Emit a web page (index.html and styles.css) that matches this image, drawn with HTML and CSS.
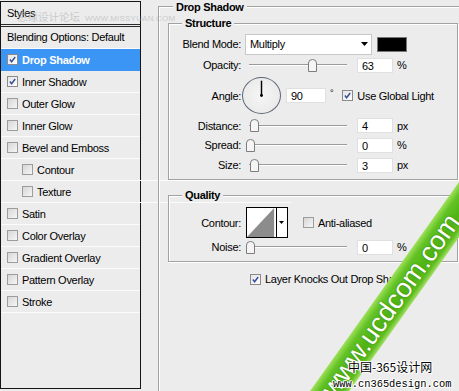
FILE: index.html
```html
<!DOCTYPE html>
<html>
<head>
<meta charset="utf-8">
<link rel="stylesheet" href="styles.css">
</head>
<body>
<div class="app">
  <aside class="styles">
    <div class="styles-head">Styles</div>
    <div class="blend-row">Blending Options: Default</div>
    <ul class="fx-list">
      <li class="fx selected"><span class="cb on"><svg viewBox="0 0 11 11"><path d="M2.3 5.6 L4.4 8.2 L8.8 2.4"/></svg></span>Drop Shadow</li>
      <li class="fx"><span class="cb on"><svg viewBox="0 0 11 11"><path d="M2.3 5.6 L4.4 8.2 L8.8 2.4"/></svg></span>Inner Shadow</li>
      <li class="fx"><span class="cb"></span>Outer Glow</li>
      <li class="fx"><span class="cb"></span>Inner Glow</li>
      <li class="fx"><span class="cb"></span>Bevel and Emboss</li>
      <li class="fx sub"><span class="cb"></span>Contour</li>
      <li class="fx sub"><span class="cb"></span>Texture</li>
      <li class="fx"><span class="cb"></span>Satin</li>
      <li class="fx"><span class="cb"></span>Color Overlay</li>
      <li class="fx"><span class="cb"></span>Gradient Overlay</li>
      <li class="fx"><span class="cb"></span>Pattern Overlay</li>
      <li class="fx"><span class="cb"></span>Stroke</li>
    </ul>
  </aside>

  <main class="panel">
    <section class="group outer">
      <div class="g-title outer-title">Drop Shadow</div>

      <section class="group sub structure">
        <div class="g-title">Structure</div>
        <div class="row r-blend">
          <span class="lbl">Blend Mode:</span>
          <div class="select"><span>Multiply</span><svg class="arrow" viewBox="0 0 7 4"><path d="M0 0 H7 L3.5 4 Z"/></svg></div>
          <span class="swatch"></span>
        </div>
        <div class="row r-20">
          <span class="lbl">Opacity:</span>
          <div class="slider"><svg class="thumb" style="margin-left:62px" viewBox="0 0 9 13"><path d="M0.5 4 Q0.5 0.5 4.5 0.5 Q8.5 0.5 8.5 4 V12.5 H0.5 Z"/></svg></div>
          <span class="field">63</span><span class="unit">%</span>
        </div>
        <div class="row r-angle">
          <span class="lbl">Angle:</span>
          <div class="dial"><svg viewBox="0 0 39 39"><line x1="19.5" y1="19.5" x2="19.5" y2="3" /><circle cx="19.5" cy="19.5" r="1.6"/></svg></div>
          <span class="field angle-field">90</span><span class="deg">°</span>
          <span class="cb on global"><svg viewBox="0 0 11 11"><path d="M2.3 5.6 L4.4 8.2 L8.8 2.4"/></svg></span><span>Use Global Light</span>
        </div>
        <div class="row r-19">
          <span class="lbl">Distance:</span>
          <div class="slider"><svg class="thumb" style="margin-left:4px" viewBox="0 0 9 13"><path d="M0.5 4 Q0.5 0.5 4.5 0.5 Q8.5 0.5 8.5 4 V12.5 H0.5 Z"/></svg></div>
          <span class="field">4</span><span class="unit">px</span>
        </div>
        <div class="row r-20">
          <span class="lbl">Spread:</span>
          <div class="slider"><svg class="thumb" style="margin-left:0px" viewBox="0 0 9 13"><path d="M0.5 4 Q0.5 0.5 4.5 0.5 Q8.5 0.5 8.5 4 V12.5 H0.5 Z"/></svg></div>
          <span class="field">0</span><span class="unit">%</span>
        </div>
        <div class="row r-20">
          <span class="lbl">Size:</span>
          <div class="slider"><svg class="thumb" style="margin-left:4px" viewBox="0 0 9 13"><path d="M0.5 4 Q0.5 0.5 4.5 0.5 Q8.5 0.5 8.5 4 V12.5 H0.5 Z"/></svg></div>
          <span class="field">3</span><span class="unit">px</span>
        </div>
      </section>

      <section class="group sub quality">
        <div class="g-title">Quality</div>
        <div class="row r-contour">
          <span class="lbl">Contour:</span>
          <div class="contour">
            <svg class="curve" viewBox="0 0 31 31"><polygon points="0,31 29,0 29,31" /></svg>
            <svg class="c-arrow" viewBox="0 0 5 3"><path d="M0 0 H5 L2.5 3 Z"/></svg>
          </div>
          <span class="cb anti"></span><span>Anti-aliased</span>
        </div>
        <div class="row r-noise">
          <span class="lbl">Noise:</span>
          <div class="slider"><svg class="thumb" style="margin-left:0px" viewBox="0 0 9 13"><path d="M0.5 4 Q0.5 0.5 4.5 0.5 Q8.5 0.5 8.5 4 V12.5 H0.5 Z"/></svg></div>
          <span class="field">0</span><span class="unit">%</span>
        </div>
      </section>

      <div class="knock">
        <span class="cb on"><svg viewBox="0 0 11 11"><path d="M2.3 5.6 L4.4 8.2 L8.8 2.4"/></svg></span><span>Layer Knocks Out Drop Shadow</span>
      </div>
    </section>
  </main>
</div>

<div class="wm-top"><span class="wm-cjk">思缘设计论坛</span><span class="wm-url">WWW.MISSYUAN.COM</span></div>
<div class="wm-band"><span>www.ucdcom.com</span></div>
<div class="wm-cn"><div class="cn-name">中国-365设计网</div><div class="cn-url">www.cn365design.com</div></div>
</body>
</html>
```

FILE: styles.css
```css
* { box-sizing: border-box; margin: 0; padding: 0; }
html, body { width: 459px; height: 391px; overflow: hidden; }
body {
  position: relative;
  background: #ececec;
  font: 11px "Liberation Sans", Arial, sans-serif;
  letter-spacing: -0.3px;
  color: #000;
}
.app { display: flex; height: 391px; }

/* Left styles list */
.styles {
  flex: none;
  width: 141px;
  height: 388px;
  margin-top: 1px;
  border: 1px solid #151515;
  background: #ececec;
}
.styles-head {
  height: 23px;
  padding-left: 6px;
  line-height: 22px;
  border-bottom: 1px solid #2a2a2a;
}
.blend-row {
  height: 23px;
  margin-top: 1px;
  border-top: 1px solid #2a2a2a;
  border-bottom: 1px solid #fbfbfb;
  padding-left: 6px;
  line-height: 21px;
}
.fx-list { list-style: none; }
.fx {
  display: flex;
  align-items: center;
  height: 22px;
  padding-left: 6px;
  border-bottom: 1px solid #fbfbfb;
}
.fx.sub { padding-left: 21px; }
.fx .cb { margin-right: 4px; }
.fx.selected {
  background: #3b95f4;
  color: #fff;
  font-weight: bold;
  border-bottom-color: #3b95f4;
}

/* checkbox */
.cb {
  flex: none;
  display: inline-block;
  width: 11px;
  height: 11px;
  border: 1px solid #9c9c9c;
  background: linear-gradient(135deg, #d6d6d6, #f6f6f6);
}
.cb.on { background: linear-gradient(135deg, #e4e4e4, #ffffff); border-color: #8a8a8a; }
.cb svg { display: block; width: 9px; height: 9px; }
.cb path { fill: none; stroke: #35509a; stroke-width: 1.8; }

/* right panel */
.panel { flex: none; padding: 6px 0 0 17px; }
.group {
  border: 1px solid #a2a2a2;
  box-shadow: inset 1px 1px 0 #fff, 1px 1px 0 #fff;
}
.outer {
  width: 330px;
  height: 420px;
  padding-left: 9px;
  border-right: none;
}
.g-title {
  width: max-content;
  margin: -8px 0 0 13px;
  padding: 0 3px;
  line-height: 14px;
  font-weight: bold;
  background: #ececec;
}
.outer-title { margin: -7px 0 0 5px; }
.sub { width: 290px; }
.structure { margin-top: 9px; padding-bottom: 4px; }
.quality { margin-top: 15px; padding-bottom: 5px; }

.row { display: flex; align-items: center; }
.lbl { flex: none; width: 72px; text-align: right; }
.r-blend { height: 22px; margin-top: 3px; }
.r-20 { height: 20px; }
.r-19 { height: 19px; }
.r-angle { height: 41px; }
.r-contour { height: 31px; margin-top: 5px; }
.r-noise { height: 18px; }

.select {
  display: flex;
  align-items: center;
  justify-content: space-between;
  width: 127px;
  height: 21px;
  margin-left: 4px;
  padding: 0 3px 0 4px;
  background: #fff;
  border: 1px solid #c9c9c9;
}
.select .arrow { width: 7px; height: 4px; fill: #000; }
.swatch {
  width: 30px;
  height: 15px;
  margin-left: 5px;
  background: #000;
  border: 1px solid #777;
}

.slider {
  flex: none;
  display: flex;
  align-items: center;
  width: 104px;
  height: 14px;
  margin-left: 5px;
  background:
    linear-gradient(#9a9a9a, #9a9a9a) 3px 6px / 98px 1px no-repeat,
    linear-gradient(#fff, #fff) 3px 7px / 98px 1px no-repeat;
}
.thumb { flex: none; width: 9px; height: 13px; }
.thumb path { fill: #f5f5f5; stroke: #7d7d7d; stroke-width: 1; }

.field {
  flex: none;
  width: 36px;
  height: 15px;
  margin-left: 7px;
  padding-left: 4px;
  line-height: 14px;
  background: #fff;
  border: 1px solid #e0e0e0;
}
.unit { margin-left: 4px; }

.dial {
  flex: none;
  width: 39px;
  height: 37px;
  margin-left: 1px;
  border: 1.5px solid #5e6578;
  border-radius: 50%;
  background: radial-gradient(circle at 50% 50%, #f6f6f6, #e6e6e6);
  display: flex;
  align-items: center;
  justify-content: center;
}
.dial svg { width: 35px; height: 35px; }
.dial line { stroke: #000; stroke-width: 1.6; }
.dial circle { fill: #000; }
.angle-field { width: 40px; margin-left: 5px; }
.deg { margin: -6px 0 0 4px; font-size: 9px; }
.global { margin: 0 4px 0 9px; }

.contour {
  flex: none;
  display: flex;
  width: 42px;
  height: 31px;
  margin-left: 5px;
  border: 1px solid #000;
  background: #fff;
}
.curve { width: 30px; height: 29px; border-right: 1px solid #000; }
.curve polygon { fill: #8c8c8c; }
.c-arrow { width: 5px; height: 3px; margin: 13px 0 0 2px; fill: #000; }
.anti { margin: 0 4px 0 15px; }

.knock {
  display: flex;
  align-items: center;
  height: 14px;
  margin: 10px 0 0 82px;
}
.knock .cb { margin-right: 4px; }

/* watermarks (overlays) */
.wm-top {
  position: absolute;
  left: 17px;
  top: 9px;
  color: rgba(170, 170, 170, 0.55);
  white-space: nowrap;
  letter-spacing: 0;
}
.wm-cjk { font: 10.5px "Noto Sans CJK SC", sans-serif; }
.wm-url { font: 8px "Liberation Sans", sans-serif; margin-left: 5px; letter-spacing: 0.2px; }

.wm-band {
  position: absolute;
  left: 196px;
  top: 282px;
  width: 400px;
  height: 32px;
  transform: rotate(-54.5deg);
  background: linear-gradient(to bottom, #9ee05a 0%, #62c223 22%, #4fb314 60%, #5fbe22 85%, #a4e067 100%);
  display: flex;
  align-items: center;
}
.wm-band span {
  margin-left: 82px;
  font: 27px "Liberation Sans", Arial, sans-serif;
  letter-spacing: 0;
  color: #fff;
  text-shadow: 0 0 2px #3d8f0c, 0 0 1px #3d8f0c;
  line-height: 30px;
}

.wm-cn {
  position: absolute;
  left: 333px;
  top: 359px;
  white-space: nowrap;
  letter-spacing: 0;
  color: #000;
  text-shadow: 1px 0 0 #fff, -1px 0 0 #fff, 0 1px 0 #fff, 0 -1px 0 #fff, 1px 1px 0 #fff, -1px -1px 0 #fff;
}
.cn-name { margin-left: 15px; font: 12px/16px "Noto Sans CJK SC", sans-serif; }
.cn-url { margin-top: 2px; font: 10.4px/14px "Liberation Mono", monospace; }
```
